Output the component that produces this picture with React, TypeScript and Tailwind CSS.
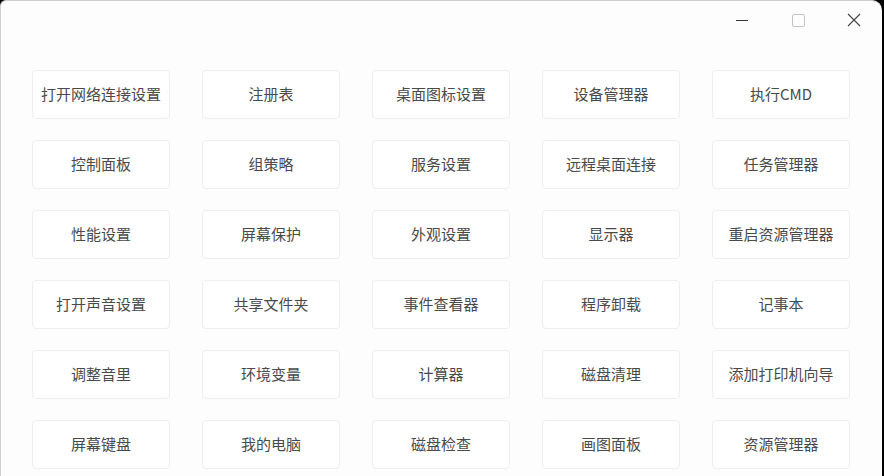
import React from 'react';

const items: string[] = [
  '打开网络连接设置', '注册表', '桌面图标设置', '设备管理器', '执行CMD',
  '控制面板', '组策略', '服务设置', '远程桌面连接', '任务管理器',
  '性能设置', '屏幕保护', '外观设置', '显示器', '重启资源管理器',
  '打开声音设置', '共享文件夹', '事件查看器', '程序卸载', '记事本',
  '调整音里', '环境变量', '计算器', '磁盘清理', '添加打印机向导',
  '屏幕键盘', '我的电脑', '磁盘检查', '画图面板', '资源管理器',
];

const App: React.FC = () => {
  return (
    <div className="w-[884px] h-[476px] bg-black overflow-hidden">
      <div
        className="relative w-[882px] h-[476px] bg-[#fdfdfd] rounded-tl-[6px] rounded-tr-[10px] border-l border-t border-[#cfcfcf]"
        style={{ fontFamily: '"Noto Sans CJK SC", "Liberation Sans", sans-serif' }}
      >
        {/* window controls */}
        <div className="absolute top-0 right-0 flex items-center h-[38px]">
          <div className="w-[56px] flex justify-center">
            <div className="w-[12px] h-px bg-[#333]" />
          </div>
          <div className="w-[56px] flex justify-center">
            <div className="w-[13px] h-[13px] border border-[#c4c4c4] rounded-[2px]" />
          </div>
          <div className="w-[56px] flex justify-center">
            <svg width="14" height="14" viewBox="0 0 14 14">
              <path d="M1 1 L13 13 M13 1 L1 13" stroke="#444" strokeWidth="1.1" fill="none" />
            </svg>
          </div>
        </div>

        <div className="pt-[69px] pl-[31px] grid grid-cols-[repeat(5,138px)] gap-x-[32px] gap-y-[21px]">
          {items.map((label, i) => (
            <button
              key={i}
              className="h-[49px] bg-white border border-[#eeeeee] rounded-[4px] text-[15px] text-[#4a4a4a] flex items-center justify-center whitespace-nowrap"
            >
              {label}
            </button>
          ))}
        </div>
      </div>
    </div>
  );
};

export default App;
